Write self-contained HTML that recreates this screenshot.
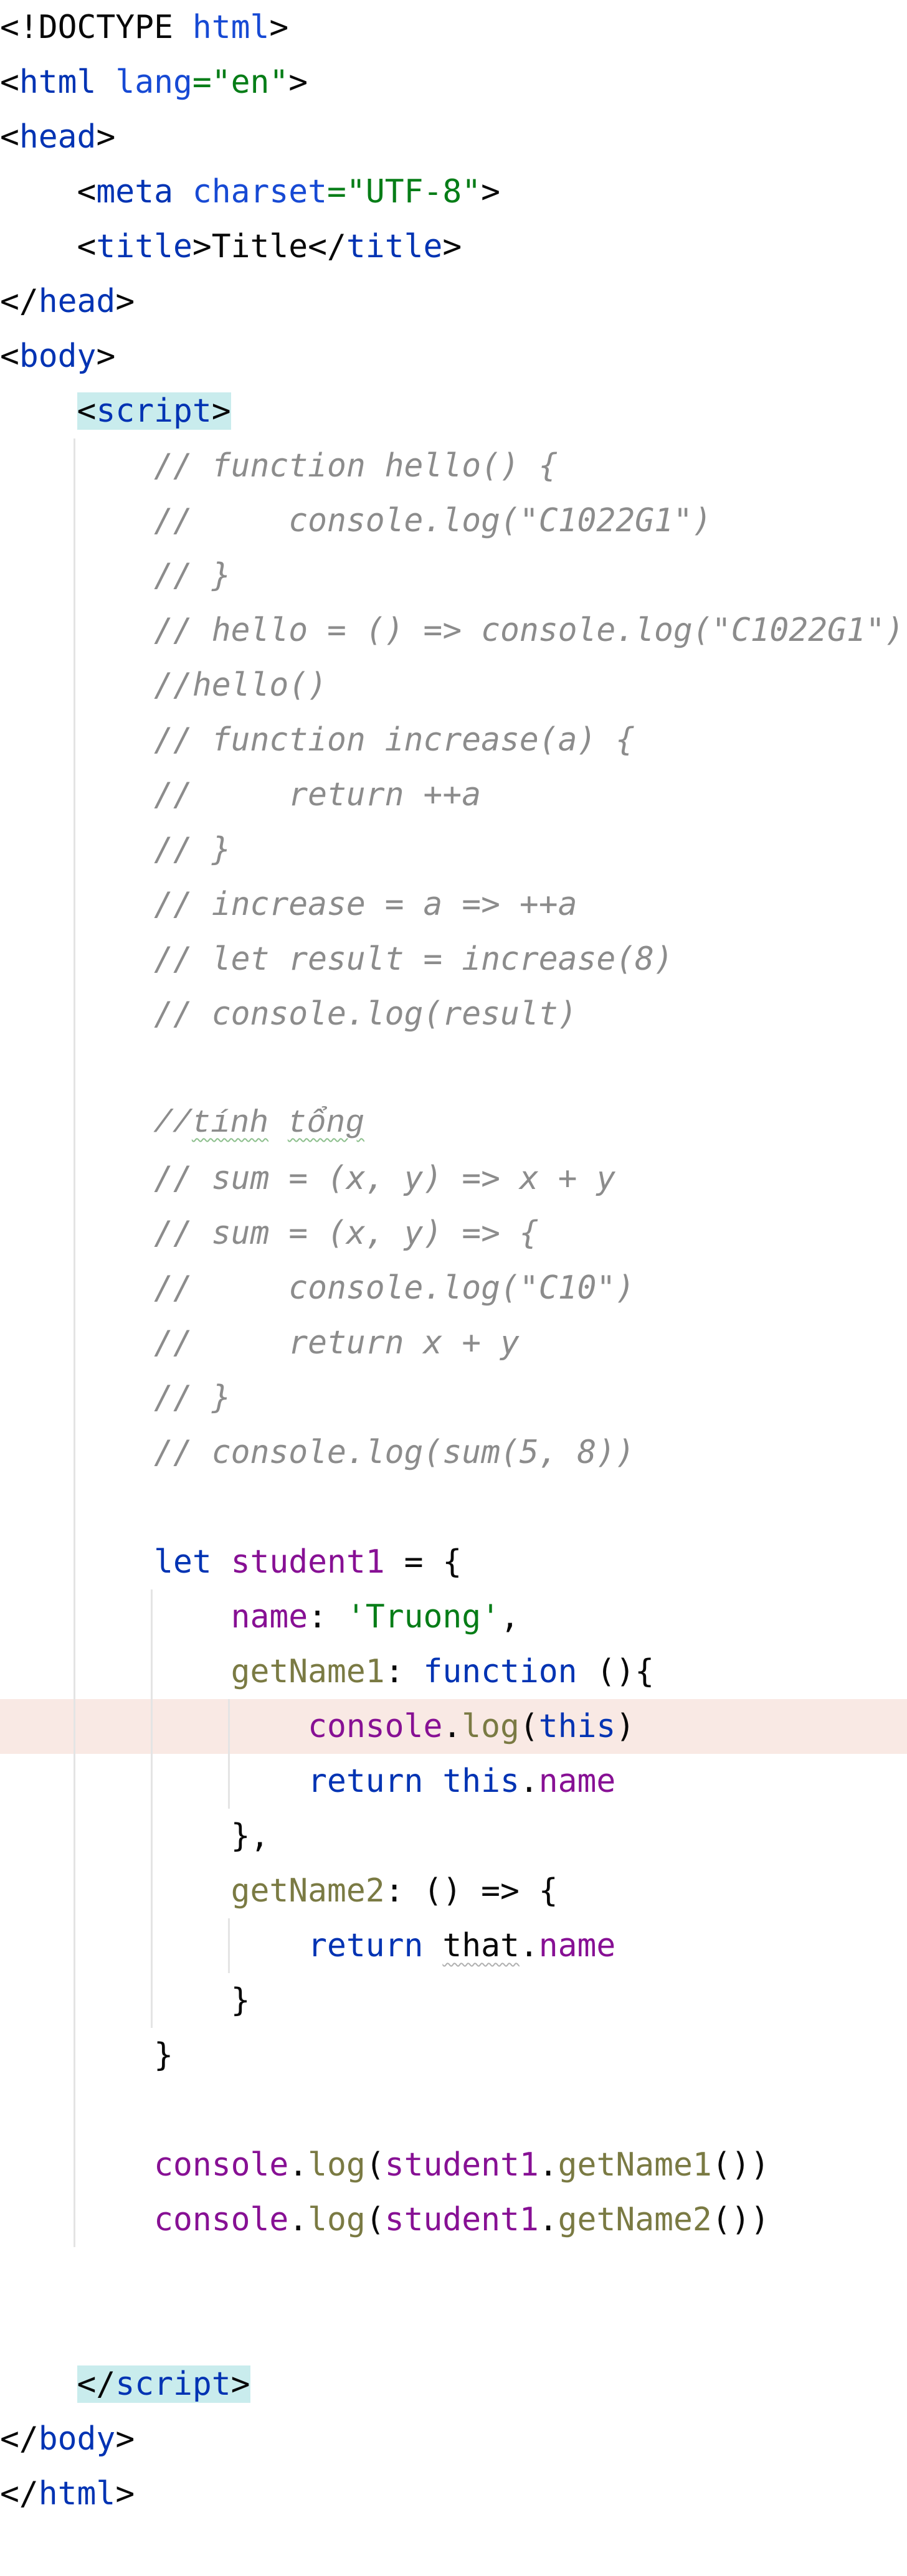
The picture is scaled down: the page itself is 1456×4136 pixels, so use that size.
<!DOCTYPE html>
<html lang="en"><head><meta charset="UTF-8"><title>code</title>
<style>
html,body{margin:0;padding:0;background:#fff;width:1456px;height:4136px;overflow:hidden;position:relative}
.code{position:absolute;left:0;top:0;width:1456px;font-family:"DejaVu Sans Mono","Liberation Mono",monospace;font-size:51.3px;line-height:88px;color:#080808}
.l{height:88px;position:relative;z-index:2;white-space:pre}
.hl{position:absolute;left:0;width:1456px;height:88px;top:2728px;background:#f9e9e4;z-index:0}
.g{position:absolute;width:3px;background:#e4e4e4;z-index:1}
.t{color:#0033b3}.a{color:#174ad4}.s{color:#067d17}.c{color:#8c8c8c;font-style:italic}
.p{color:#871094}.m{color:#7a7a43}.k{color:#0033b3}
.sb{background:#c9eced}
.lm{font-family:"Liberation Mono",monospace}
.w{text-decoration:underline wavy #8dbf8d;text-decoration-thickness:2px;text-underline-offset:10px}
.w2{text-decoration:underline wavy #b0b0b0;text-decoration-thickness:2px;text-underline-offset:10px}
</style></head><body>
<div class="hl"></div>
<div class="g" style="left:118px;top:704px;height:2904px"></div>
<div class="g" style="left:242px;top:2552px;height:704px"></div>
<div class="g" style="left:366px;top:2728px;height:176px"></div>
<div class="g" style="left:366px;top:3080px;height:88px"></div>
<div class="code"><div class="l">&lt;!DOCTYPE <span class="a">html</span>&gt;</div><div class="l">&lt;<span class="t">html</span> <span class="a">lang</span><span class="s">="en"</span>&gt;</div><div class="l">&lt;<span class="t">head</span>&gt;</div><div class="l">    &lt;<span class="t">meta</span> <span class="a">charset</span><span class="s">="UTF-8"</span>&gt;</div><div class="l">    &lt;<span class="t">title</span>&gt;Title&lt;/<span class="t">title</span>&gt;</div><div class="l">&lt;/<span class="t">head</span>&gt;</div><div class="l">&lt;<span class="t">body</span>&gt;</div><div class="l">    <span class="sb">&lt;<span class="t">script</span>&gt;</span></div><div class="l c">        // function hello() {</div><div class="l c">        //     console.log("C1022G1")</div><div class="l c">        // }</div><div class="l c">        // hello = () =&gt; console.log("C1022G1")</div><div class="l c">        //hello()</div><div class="l c">        // function increase(a) {</div><div class="l c">        //     return ++a</div><div class="l c">        // }</div><div class="l c">        // increase = a =&gt; ++a</div><div class="l c">        // let result = increase(8)</div><div class="l c">        // console.log(result)</div><div class="l"> </div><div class="l c lm">        //<span class="w">t&#xED;nh</span> <span class="w">t&#x1ED5;ng</span></div><div class="l c">        // sum = (x, y) =&gt; x + y</div><div class="l c">        // sum = (x, y) =&gt; {</div><div class="l c">        //     console.log("C10")</div><div class="l c">        //     return x + y</div><div class="l c">        // }</div><div class="l c">        // console.log(sum(5, 8))</div><div class="l"> </div><div class="l">        <span class="k">let</span> <span class="p">student1</span> = {</div><div class="l">            <span class="p">name</span>: <span class="s">'Truong'</span>,</div><div class="l">            <span class="m">getName1</span>: <span class="k">function</span> (){</div><div class="l">                <span class="p">console</span>.<span class="m">log</span>(<span class="k">this</span>)</div><div class="l">                <span class="k">return</span> <span class="k">this</span>.<span class="p">name</span></div><div class="l">            },</div><div class="l">            <span class="m">getName2</span>: () =&gt; {</div><div class="l">                <span class="k">return</span> <span class="w2">that</span>.<span class="p">name</span></div><div class="l">            }</div><div class="l">        }</div><div class="l"> </div><div class="l">        <span class="p">console</span>.<span class="m">log</span>(<span class="p">student1</span>.<span class="m">getName1</span>())</div><div class="l">        <span class="p">console</span>.<span class="m">log</span>(<span class="p">student1</span>.<span class="m">getName2</span>())</div><div class="l"> </div><div class="l"> </div><div class="l">    <span class="sb">&lt;/<span class="t">script</span>&gt;</span></div><div class="l">&lt;/<span class="t">body</span>&gt;</div><div class="l">&lt;/<span class="t">html</span>&gt;</div></div>
</body></html>
